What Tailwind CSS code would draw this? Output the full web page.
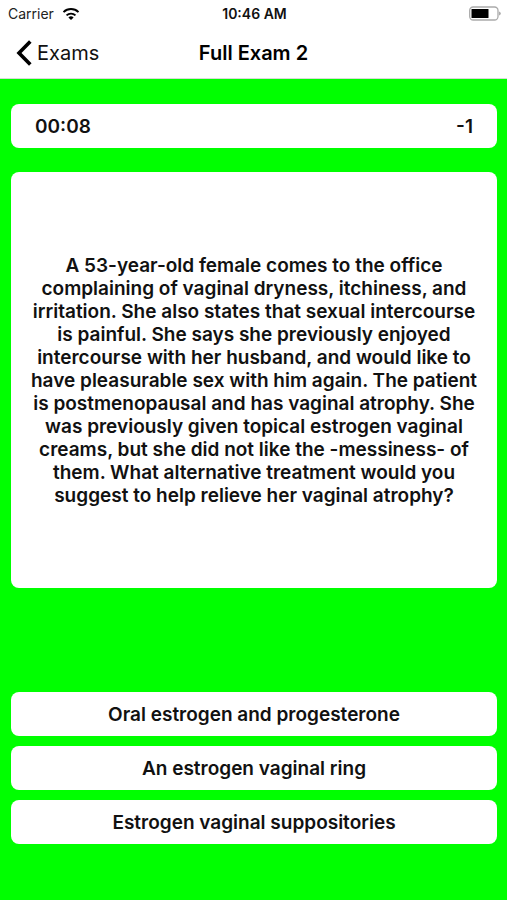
<!DOCTYPE html>
<html lang="en">
<head>
<meta charset="utf-8">
<meta name="viewport" content="width=device-width, initial-scale=1">
<title>Full Exam 2</title>
<script src="https://cdn.jsdelivr.net/npm/@tailwindcss/browser@4"></script>
</head>
<body class="flex min-h-screen flex-col bg-[#00ff00] font-['Inter',sans-serif] text-black">
<header class="border-b border-[#d5dcd5] bg-white">
  <div class="grid h-7 grid-cols-3 items-center pr-[6px] pl-2 text-sm">
    <div class="flex items-center gap-2 text-[#222]"><span>Carrier</span>
      <svg class="h-3 w-[18px]" viewBox="0 0 18 12" aria-hidden="true"><path d="M9 12 6.4 9.400a3.800 3.800 0 0 1 5.200 0z"/><path d="M4.500 7.400a6.500 6.500 0 0 1 9 0M1.500 4.100a10.800 10.800 0 0 1 15 0" fill="none" stroke="#000" stroke-width="1.900"/></svg>
    </div>
    <span class="text-center font-semibold text-[#111]">10:46 AM</span>
    <svg class="h-4 w-8 justify-self-end" viewBox="0 0 32 16" aria-hidden="true"><rect x=".7" y="1" width="28.300" height="13" rx="3.500" fill="none" stroke="#aaa" stroke-width="1.300"/><rect x="2.500" y="3" width="17" height="9" rx=".5"/><path d="M30.300 5.500q1.300 .6 1.300 2t-1.300 2z" fill="#888"/></svg>
  </div>
  <nav class="grid h-[50px] grid-cols-[1fr_auto_1fr] items-center px-4">
    <a href="#" class="flex items-center gap-[5px] text-xl text-[#111]"><svg class="h-7 w-4" viewBox="0 0 16 28" fill="none" stroke="#000" stroke-width="3.600" aria-hidden="true"><path d="M14.300 2.500 3 14l11.300 11.500"/></svg>Exams</a>
    <h1 class="text-xl font-semibold">Full Exam 2</h1>
  </nav>
</header>
<main class="flex flex-col pt-[25px] pr-[10px] pl-[11px] text-[19px] leading-[23px] font-semibold text-[#111]">
  <div class="flex h-11 items-center justify-between rounded-lg bg-white px-6"><span>00:08</span><span>-1</span></div>
  <section class="mt-6 flex min-h-[416px] items-center justify-center rounded-lg bg-white px-4">
    <p class="text-center">A 53-year-old female comes to the office<br>complaining of vaginal dryness, itchiness, and<br>irritation. She also states that sexual intercourse<br>is painful. She says she previously enjoyed<br>intercourse with her husband, and would like to<br>have pleasurable sex with him again. The patient<br>is postmenopausal and has vaginal atrophy. She<br>was previously given topical estrogen vaginal<br>creams, but she did not like the -messiness- of<br>them. What alternative treatment would you<br>suggest to help relieve her vaginal atrophy?</p>
  </section>
  <div class="mt-[104px] flex flex-col gap-[10px]">
    <button class="h-11 rounded-lg bg-white">Oral estrogen and progesterone</button>
    <button class="h-11 rounded-lg bg-white">An estrogen vaginal ring</button>
    <button class="h-11 rounded-lg bg-white">Estrogen vaginal suppositories</button>
  </div>
</main>
</body>
</html>
